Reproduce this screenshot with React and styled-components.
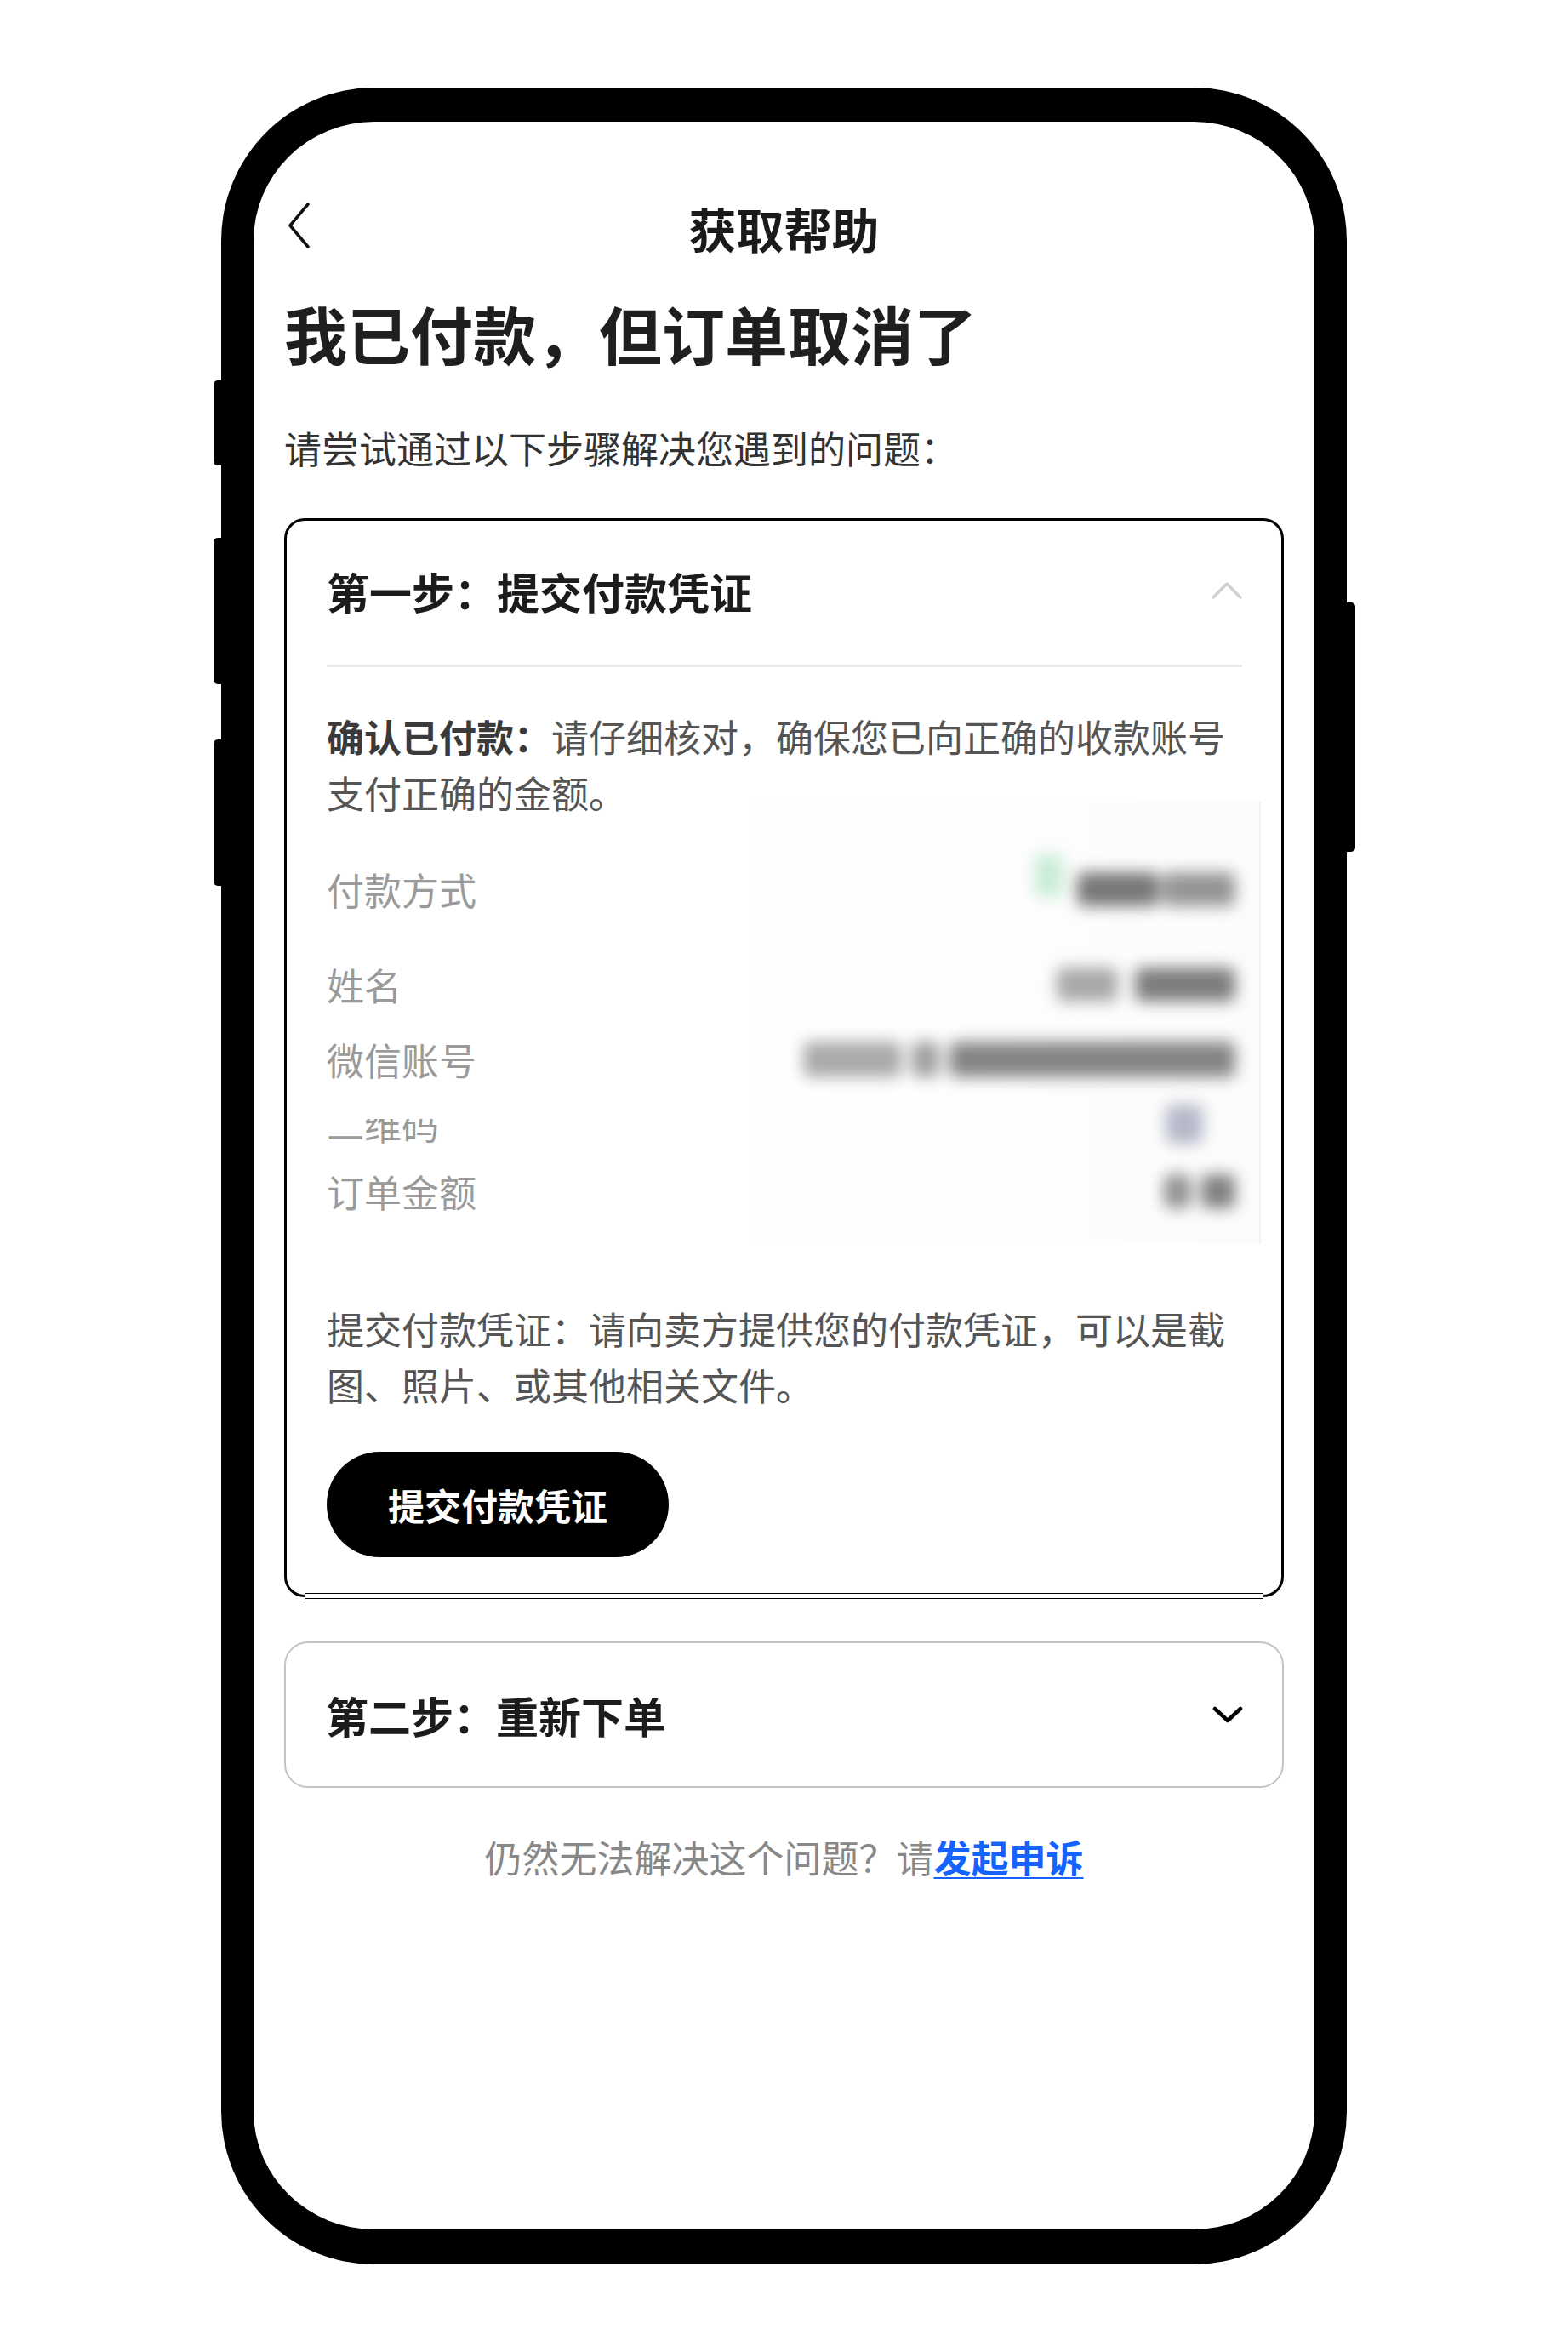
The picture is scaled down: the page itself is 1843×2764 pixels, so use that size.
import React from 'react'
import styled, { createGlobalStyle } from 'styled-components'

const GlobalStyle = createGlobalStyle`
  html, body {
    margin: 0;
    padding: 0;
    background: #fff;
  }
  body {
    font-family: "Noto Sans CJK SC", "Noto Sans", sans-serif;
  }
`

const Page = styled.div`
  width: 1843px;
  min-height: 2764px;
  padding-top: 103px;
  box-sizing: border-box;
  display: flex;
  justify-content: center;
  align-items: flex-start;
`

const Phone = styled.div`
  position: relative;
  width: 1323px;
  height: 2558px;
  box-sizing: border-box;
  border: solid #000;
  border-width: 40px 38px 41px;
  border-radius: 180px;
  background: #fff;
`

const SideKey = styled.span`
  position: absolute;
  top: ${p => p.$top}px;
  height: ${p => p.$h}px;
  width: 14px;
  background: #000;
  ${p => (p.$right ? 'right: -48px; border-radius: 0 5px 5px 0;' : 'left: -47px; border-radius: 5px 0 0 5px;')}
`

const Screen = styled.div`
  height: 100%;
  box-sizing: border-box;
  padding: 85px 36px 0;
  display: flex;
  flex-direction: column;
`

const Header = styled.header`
  display: grid;
  grid-template-columns: 1fr auto 1fr;
  align-items: center;
  height: 80px;
`

const BackButton = styled.button`
  justify-self: start;
  display: flex;
  width: 36px;
  height: 56px;
  padding: 0;
  border: 0;
  background: none;
  margin-top: -6px;
`

const Title = styled.h1`
  margin: 0;
  font-size: 56px;
  font-weight: 700;
  line-height: 80px;
  color: #1a1a1a;
`

const Heading = styled.h2`
  margin: 38px 0 0;
  font-size: 74px;
  font-weight: 700;
  line-height: 89px;
  color: #1f1f1f;
`

const Intro = styled.p`
  margin: 58px 0 0;
  font-size: 44px;
  line-height: 66px;
  color: #333;
`

const StepCard = styled.section`
  position: relative;
  margin-top: ${p => p.$gap}px;
  padding: 0 46px 0 47px;
  border: ${p => (p.$open ? '3px solid #000' : '2px solid #c4c4c4')};
  border-radius: ${p => (p.$open ? 24 : 28)}px;
  padding-bottom: ${p => (p.$open ? 44 : 0)}px;

  ${p => p.$open && `
    &::after {
      content: '';
      position: absolute;
      left: 21px;
      right: 21px;
      bottom: -8px;
      height: 10px;
      background: repeating-linear-gradient(180deg, #000 0 1px, #fff 1px 3px);
    }
  `}
`

const StepHead = styled.div`
  display: flex;
  justify-content: space-between;
  align-items: center;
  ${p => (p.$open
    ? 'padding: 46px 0 51px; border-bottom: 3px solid #ebebeb;'
    : 'height: 168px;')}
`

const StepTitle = styled.h3`
  margin: 0;
  font-size: 50px;
  font-weight: 700;
  line-height: 72px;
  color: #1c1c1c;
`

const Para = styled.p`
  margin: ${p => p.$top}px 0 0;
  font-size: 44px;
  line-height: 66px;
  color: #555;
  text-spacing-trim: space-all;

  strong {
    color: #3a3a3a;
    font-weight: 700;
  }
`

const InfoBlock = styled.div`
  margin: -22px -22px 0 0;
  padding: 70px 22px 29px 0;
  background: linear-gradient(90deg, #fff 45%, #fcfcfc);
  border-right: 2px solid #f4f4f4;
`

const InfoRow = styled.div`
  display: flex;
  justify-content: space-between;
  align-items: center;
  height: 66px;
  margin-top: ${p => p.$top}px;
`

const Label = styled.span`
  font-size: 44px;
  line-height: 66px;
  color: #9a9a9a;
  ${p => p.$clipped && 'clip-path: inset(27px 0 0 0);'}
`

const Blurred = styled.div`
  display: flex;
  align-items: center;
  padding-right: ${p => p.$pr || 6}px;
  filter: blur(9px);
`

const Smudge = styled.span`
  display: block;
  width: ${p => p.$w}px;
  height: ${p => p.$h}px;
  margin-left: ${p => p.$gap}px;
  transform: translateY(${p => p.$dy}px);
  background: ${p => p.$c};
  border-radius: 8px;
`

const SubmitButton = styled.button`
  display: flex;
  align-items: center;
  justify-content: center;
  margin-top: 46px;
  width: 402px;
  height: 124px;
  border: 0;
  border-radius: 62px;
  background: #000;
  color: #fff;
  font-family: inherit;
  font-size: 43px;
  font-weight: 700;
`

const Footer = styled.p`
  margin: 48px 0 0;
  text-align: center;
  font-size: 44px;
  line-height: 66px;
  color: #888;

  a {
    color: #1463ff;
    font-weight: 700;
    text-decoration: underline;
    text-decoration-thickness: 2px;
    text-underline-offset: 5px;
  }
`

const Chevron = ({ up, color, width }) => (
  <svg width="36" height="20" viewBox="0 0 36 20" fill="none">
    <polyline
      points={up ? '2,18 18,2 34,18' : '3,3 18,17 33,3'}
      stroke={color}
      strokeWidth={width}
      strokeLinecap="round"
      strokeLinejoin="round"
    />
  </svg>
)

// blurred values: [width, colour, gap before, height, vertical shift]
const rows = [
  { label: '付款方式', top: 0, blobs: [[34, '#c9ecd6', 0, 50, -16], [96, '#777', 16, 40, 0], [86, '#959595', 4, 40, 0]] },
  { label: '姓名', top: 46, blobs: [[72, '#a8a8a8', 0, 40, 0], [118, '#7c7c7c', 20, 40, 0]] },
  { label: '微信账号', top: 22, blobs: [[116, '#aaa', 0, 42, 0], [32, '#9e9e9e', 12, 42, 0], [336, '#858585', 12, 42, 0]] },
  { label: '二维码', top: 10, clipped: true, pr: 44, blobs: [[44, '#b4b8c8', 0, 46, 0]] },
  { label: '订单金额', top: 13, blobs: [[32, '#919191', 0, 40, 0], [40, '#808080', 12, 40, 0]] },
]

export default function App() {
  return (
    <>
      <GlobalStyle />
      <Page>
        <Phone>
          <SideKey $top={304} $h={100} />
          <SideKey $top={489} $h={172} />
          <SideKey $top={726} $h={172} />
          <SideKey $right $top={565} $h={293} />
          <Screen>
            <Header>
              <BackButton aria-label="返回">
                <svg width="36" height="56" viewBox="0 0 36 56" fill="none">
                  <polyline points="28,3 7,28 28,53" stroke="#111" strokeWidth="3.5" strokeLinecap="round" strokeLinejoin="round" />
                </svg>
              </BackButton>
              <Title>获取帮助</Title>
            </Header>

            <Heading>我已付款，但订单取消了</Heading>
            <Intro>请尝试通过以下步骤解决您遇到的问题：</Intro>

            <StepCard $open $gap={50}>
              <StepHead $open>
                <StepTitle>第一步：提交付款凭证</StepTitle>
                <Chevron up color="#d0d0d0" width={3.5} />
              </StepHead>
              <Para $top={48}>
                <strong>确认已付款：</strong>请仔细核对，确保您已向正确的收款账号支付正确的金额。
              </Para>
              <InfoBlock>
                {rows.map(r => (
                  <InfoRow key={r.label} $top={r.top}>
                    <Label $clipped={r.clipped}>{r.label}</Label>
                    <Blurred $pr={r.pr}>
                      {r.blobs.map(([w, c, gap, h, dy], i) => (
                        <Smudge key={i} $w={w} $c={c} $gap={gap} $h={h} $dy={dy} />
                      ))}
                    </Blurred>
                  </InfoRow>
                ))}
              </InfoBlock>
              <Para $top={66}>
                提交付款凭证：请向卖方提供您的付款凭证，可以是截图、照片、或其他相关文件。
              </Para>
              <SubmitButton>提交付款凭证</SubmitButton>
            </StepCard>

            <StepCard $gap={52}>
              <StepHead>
                <StepTitle>第二步：重新下单</StepTitle>
                <Chevron color="#000" width={4.5} />
              </StepHead>
            </StepCard>

            <Footer>
              仍然无法解决这个问题？请<a href="#/">发起申诉</a>
            </Footer>
          </Screen>
        </Phone>
      </Page>
    </>
  )
}
